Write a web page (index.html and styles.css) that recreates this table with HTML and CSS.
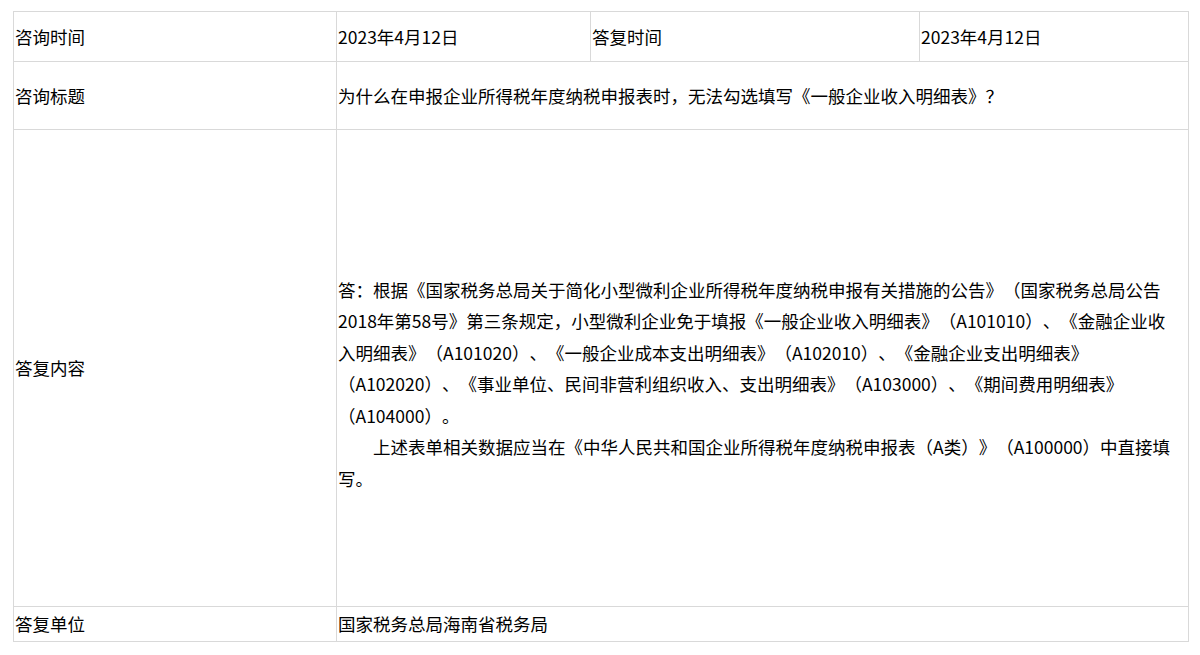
FILE: index.html
```html
<!DOCTYPE html>
<html lang="zh-CN">
<head>
    <meta charset="UTF-8">
    <meta name="viewport" content="width=device-width, initial-scale=1.0">
    <title>咨询详情</title>
    <link rel="stylesheet" href="styles.css">
</head>
<body>
    <table class="detail-table">
        <colgroup>
            <col class="col-label">
            <col class="col-value">
            <col class="col-label2">
            <col class="col-value2">
        </colgroup>
        <tr class="row-time">
            <td>咨询时间</td>
            <td>2023年4月12日</td>
            <td>答复时间</td>
            <td>2023年4月12日</td>
        </tr>
        <tr class="row-title">
            <td>咨询标题</td>
            <td colspan="3">为什么在申报企业所得税年度纳税申报表时，无法勾选填写《一般企业收入明细表》？</td>
        </tr>
        <tr class="row-content">
            <td>答复内容</td>
            <td colspan="3">
                <div class="answer">
                    <p>答：根据《国家税务总局关于简化小型微利企业所得税年度纳税申报有关措施的公告》（国家税务总局公告2018年第58号》第三条规定，小型微利企业免于填报《一般企业收入明细表》（A101010）、《金融企业收入明细表》（A101020）、《一般企业成本支出明细表》（A102010）、《金融企业支出明细表》（A102020）、《事业单位、民间非营利组织收入、支出明细表》（A103000）、《期间费用明细表》（A104000）。</p>
                    <p class="indent">上述表单相关数据应当在《中华人民共和国企业所得税年度纳税申报表（A类）》（A100000）中直接填写。</p>
                </div>
            </td>
        </tr>
        <tr class="row-unit">
            <td>答复单位</td>
            <td colspan="3">国家税务总局海南省税务局</td>
        </tr>
    </table>
</body>
</html>
```

FILE: styles.css
```css
body {
    margin: 0;
    padding: 11px 0 0 13px;
    background: #fff;
    color: #000;
    font-family: "Noto Sans CJK SC", "Liberation Sans", sans-serif;
    font-size: 17.5px;
    text-spacing-trim: space-all;
}
.detail-table {
    width: 1175px;
    border-collapse: collapse;
    table-layout: fixed;
}
.col-label {
    width: 323px;
}
.col-value {
    width: 254px;
}
.col-label2 {
    width: 329px;
}
.col-value2 {
    width: 269px;
}
.detail-table td {
    border: 1px solid #d9d9d9;
    padding: 0 1px;
    vertical-align: middle;
    line-height: 31.5px;
}
.row-time td {
    height: 49px;
}
.row-title td {
    height: 67px;
}
.row-content td {
    height: 476px;
}
.row-unit td {
    height: 34px;
}
.answer {
    padding: 32px 10px 0 0;
}
.answer p {
    margin: 0;
}
.answer .indent {
    text-indent: 2em;
}
```
